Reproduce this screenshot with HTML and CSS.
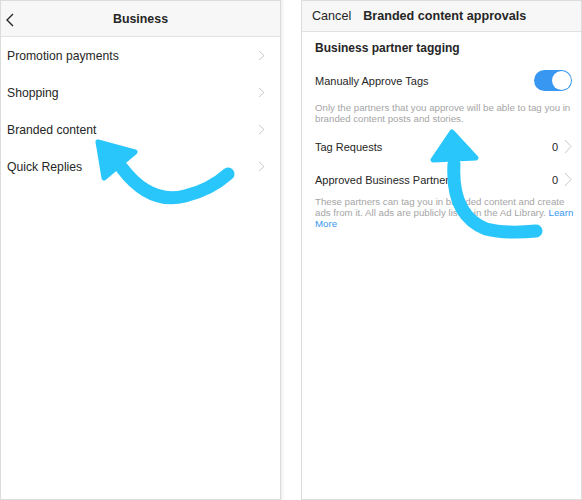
FILE: index.html
```html
<html>
  <head>
    <link rel="stylesheet" href="styles.css">
  </head>
  <body>
    <div class="screens">
      <div class="phone">
        <div class="bar">
          <svg class="back" width="9" height="14" viewBox="0 0 9 14"><path d="M8 1 L2 7 L8 13" fill="none" stroke="#262626" stroke-width="1.4"/></svg>
          <span class="bar-title">Business</span>
        </div>
        <ul class="menu">
          <li>Promotion payments<svg class="chev" width="7" height="11" viewBox="0 0 7 11"><path d="M1 1 L6 5.5 L1 10" fill="none" stroke="#c9c9c9" stroke-width="1"/></svg></li>
          <li>Shopping<svg class="chev" width="7" height="11" viewBox="0 0 7 11"><path d="M1 1 L6 5.5 L1 10" fill="none" stroke="#c9c9c9" stroke-width="1"/></svg></li>
          <li>Branded content<svg class="chev" width="7" height="11" viewBox="0 0 7 11"><path d="M1 1 L6 5.5 L1 10" fill="none" stroke="#c9c9c9" stroke-width="1"/></svg></li>
          <li>Quick Replies<svg class="chev" width="7" height="11" viewBox="0 0 7 11"><path d="M1 1 L6 5.5 L1 10" fill="none" stroke="#c9c9c9" stroke-width="1"/></svg></li>
        </ul>
        <svg class="arrow" width="281" height="500" viewBox="0 0 281 500">
          <path d="M122 168 Q150 205 185 196 Q210 190 228 174" fill="none" stroke="#29c6fb" stroke-width="13" stroke-linecap="round"/>
          <path d="M98 142 L135 152 L104 178 Z" fill="#29c6fb" stroke="#29c6fb" stroke-width="5" stroke-linejoin="round"/>
        </svg>
      </div>

      <div class="phone">
        <div class="bar bar-small">
          <span class="cancel">Cancel</span>
          <span class="bar-title">Branded content approvals</span>
        </div>
        <div class="section">
          <h3>Business partner tagging</h3>
          <div class="row">
            <span>Manually Approve Tags</span>
            <span class="toggle"></span>
          </div>
          <p class="note">Only the partners that you approve will be able to tag you in branded content posts and stories.</p>
          <div class="row">
            <span>Tag Requests</span>
            <span class="count">0<svg width="8" height="15" viewBox="0 0 8 15"><path d="M1 1 L7 7.5 L1 14" fill="none" stroke="#c9c9c9" stroke-width="1"/></svg></span>
          </div>
          <div class="row">
            <span>Approved Business Partners</span>
            <span class="count">0<svg width="8" height="15" viewBox="0 0 8 15"><path d="M1 1 L7 7.5 L1 14" fill="none" stroke="#c9c9c9" stroke-width="1"/></svg></span>
          </div>
          <p class="note note-last">These partners can tag you in branded content and create ads from it. All ads are publicly listed in the Ad Library. <a>Learn More</a></p>
        </div>
        <svg class="arrow" width="281" height="500" viewBox="0 0 281 500">
          <path d="M153 164 Q150 215 185 229 Q205 234 235 231" fill="none" stroke="#29c6fb" stroke-width="13" stroke-linecap="round"/>
          <path d="M151 132 L175 158 L132 160 Z" fill="#29c6fb" stroke="#29c6fb" stroke-width="5" stroke-linejoin="round"/>
        </svg>
      </div>
    </div>
  </body>
</html>
```

FILE: styles.css
```css
body {
  margin: 0;
  background: #fff;
  font-family: "Liberation Sans", Arial, sans-serif;
  color: #262626;
}

.screens {
  display: flex;
  gap: 20px;
  height: 500px;
}

.phone {
  position: relative;
  width: 279px;
  height: 498px;
  border: 1px solid #dcdcdc;
  background: #fff;
  box-shadow: 2px 0 2px #f0f0f0;
}

.bar {
  display: flex;
  align-items: center;
  justify-content: center;
  position: relative;
  height: 35px;
  background: #f7f7f7;
  border-bottom: 1px solid #e2e2e2;
}

.bar-title {
  font-size: 12.4px;
  font-weight: bold;
}

.back {
  position: absolute;
  left: 4px;
  top: 12px;
}

.bar-small {
  height: 30px;
  justify-content: flex-start;
  padding-left: 10px;
}

.bar-small .bar-title {
  font-size: 12.6px;
}

.cancel {
  font-size: 12.6px;
  margin-right: 12px;
}

.menu {
  list-style: none;
  margin: 0;
  padding: 0;
}

.menu li {
  display: flex;
  align-items: center;
  justify-content: space-between;
  height: 37px;
  padding: 0 15px 0 6px;
  font-size: 12.2px;
}

.section {
  padding: 0 4px 0 13px;
}

.section h3 {
  margin: 0;
  height: 32px;
  display: flex;
  align-items: center;
  font-size: 12px;
  font-weight: bold;
}

.row {
  display: flex;
  align-items: center;
  justify-content: space-between;
  height: 33px;
  padding-right: 4px;
  font-size: 11px;
}

.count {
  display: flex;
  align-items: center;
  gap: 6px;
  padding-right: 1px;
}

.toggle {
  position: relative;
  width: 38px;
  height: 21px;
  margin-right: 1px;
  border-radius: 11px;
  background: #3897f0;
}

.toggle::after {
  content: "";
  position: absolute;
  right: 1px;
  top: 1px;
  width: 19px;
  height: 19px;
  border-radius: 50%;
  background: #fff;
}

.note {
  margin: 5px 0 6px;
  padding-right: 2px;
  font-size: 9.7px;
  line-height: 11px;
  color: #a5a5a5;
}

.note-last {
  margin-top: 0;
  padding-right: 0;
}

.note a {
  color: #3897f0;
}

.arrow {
  position: absolute;
  left: -1px;
  top: -1px;
}
```
